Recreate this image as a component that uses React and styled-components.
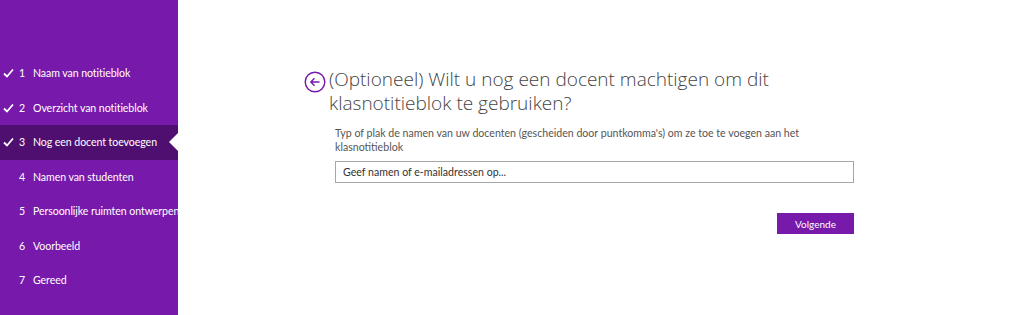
import React from "react";
import styled, { createGlobalStyle } from "styled-components";

const GlobalStyle = createGlobalStyle`
    html, body {
        margin: 0;
        padding: 0;
        background: #ffffff;
        font-family: Lato, 'Liberation Sans', sans-serif;
    }
`;

const Page = styled.div`
    display: flex;
    width: 1024px;
    height: 315px;
    overflow: hidden;
`;

const Sidebar = styled.nav`
    width: 178px;
    flex-shrink: 0;
    background: #7719aa;
    padding-top: 56px;
    box-sizing: border-box;
`;

const StepList = styled.ul`
    list-style-type: none;
    margin: 0;
    padding: 0;
`;

const Step = styled.li`
    position: relative;
    display: flex;
    align-items: center;
    height: 34.5px;
    padding-left: 3px;
    background: ${(p) => (p.active ? "#4f0f70" : "transparent")};
    color: #ffffff;
    font-size: 10.6px;
    white-space: nowrap;
`;

const Check = styled.span`
    width: 12px;
    flex-shrink: 0;
    display: flex;
    align-items: center;
`;

const Num = styled.span`
    width: 14px;
    flex-shrink: 0;
    margin-left: 4px;
`;

const Label = styled.span`
    letter-spacing: -0.08px;
`;

const Pointer = styled.span`
    position: absolute;
    right: 0;
    top: 50%;
    transform: translateY(-50%);
    width: 0;
    height: 0;
    border-top: 9px solid transparent;
    border-bottom: 9px solid transparent;
    border-right: 9px solid #ffffff;
`;

const Main = styled.main`
    flex: 1;
    padding: 67px 0 0 126px;
    box-sizing: border-box;
`;

const Header = styled.div`
    display: flex;
    align-items: flex-start;
    gap: 3px;
`;

const BackButton = styled.button`
    border: none;
    background: none;
    padding: 0;
    margin-top: 4px;
    width: 22px;
    height: 22px;
    flex-shrink: 0;
    cursor: pointer;
`;

const Title = styled.h1`
    margin: 0;
    font-family: 'Open Sans', 'Liberation Sans', sans-serif;
    font-weight: 300;
    font-size: 19px;
    line-height: 24px;
    color: #444444;
    width: 490px;
`;

const Body = styled.div`
    padding-left: 31px;
    width: 519px;
`;

const Description = styled.p`
    margin: 12px 0 7px;
    font-size: 10.6px;
    line-height: 13.5px;
    color: #555555;
`;

const Input = styled.input`
    display: block;
    width: 100%;
    height: 22px;
    box-sizing: border-box;
    border: 1px solid #a6a6a6;
    padding: 0 7px;
    font-family: inherit;
    font-size: 10.6px;
    color: #333333;
    &::placeholder {
        color: #333333;
    }
`;

const Actions = styled.div`
    display: flex;
    justify-content: flex-end;
    margin-top: 30px;
`;

const PrimaryButton = styled.button`
    width: 77px;
    height: 21px;
    border: none;
    background: #7719aa;
    color: #ffffff;
    font-family: inherit;
    font-size: 10px;
    padding: 0;
`;

const steps = [
    { label: "Naam van notitieblok", done: true },
    { label: "Overzicht van notitieblok", done: true },
    { label: "Nog een docent toevoegen", done: true, active: true },
    { label: "Namen van studenten" },
    { label: "Persoonlijke ruimten ontwerpen" },
    { label: "Voorbeeld" },
    { label: "Gereed" },
];

function CheckIcon() {
    return (
        <svg width="11" height="10" viewBox="0 0 11 10">
            <path d="M1 5.5 L4 8.5 L10 1.5" fill="none" stroke="#fff" strokeWidth="1.8" />
        </svg>
    );
}

function BackIcon() {
    return (
        <svg width="22" height="22" viewBox="0 0 22 22">
            <circle cx="11" cy="11" r="9.8" fill="none" stroke="#7719aa" strokeWidth="1.4" />
            <path d="M15.5 11 H6.8 M10.5 7.3 L6.8 11 L10.5 14.7" fill="none" stroke="#7719aa" strokeWidth="1.4" />
        </svg>
    );
}

export default function App() {
    return (
        <Page>
            <GlobalStyle />
            <Sidebar>
                <StepList>
                    {steps.map((s, i) => (
                        <Step key={s.label} active={s.active}>
                            <Check>{s.done && <CheckIcon />}</Check>
                            <Num>{i + 1}</Num>
                            <Label>{s.label}</Label>
                            {s.active && <Pointer />}
                        </Step>
                    ))}
                </StepList>
            </Sidebar>
            <Main>
                <Header>
                    <BackButton aria-label="Terug">
                        <BackIcon />
                    </BackButton>
                    <Title>
                        (Optioneel) Wilt u nog een docent machtigen om dit klasnotitieblok te gebruiken?
                    </Title>
                </Header>
                <Body>
                    <Description>
                        Typ of plak de namen van uw docenten (gescheiden door puntkomma's) om ze toe te voegen aan het klasnotitieblok
                    </Description>
                    <Input placeholder="Geef namen of e-mailadressen op..." />
                    <Actions>
                        <PrimaryButton>Volgende</PrimaryButton>
                    </Actions>
                </Body>
            </Main>
        </Page>
    );
}
